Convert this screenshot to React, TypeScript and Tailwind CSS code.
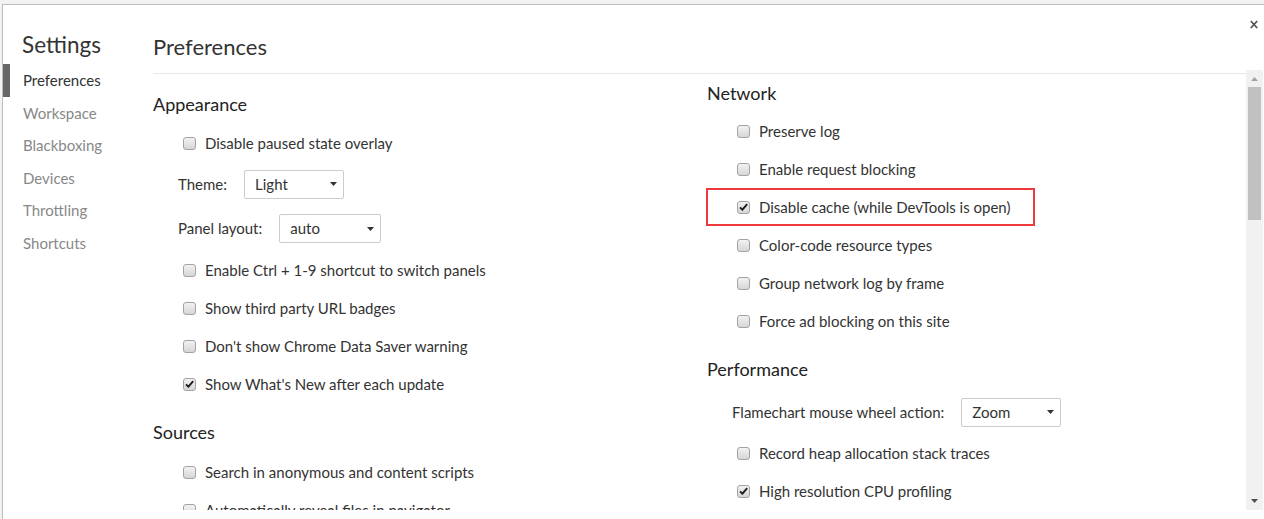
import React from "react";

const FONT = { fontFamily: "Lato, 'Noto Sans', sans-serif" };

function Box({ checked }: { checked?: boolean }) {
  return (
    <span className="w-[13px] h-[13px] shrink-0 rounded-[3px] border border-[#a3a3a3] bg-linear-to-b from-[#f2f2f2] to-[#d6d6d6] flex items-center justify-center">
      {checked && (
        <svg width="9" height="8" viewBox="0 0 9 8">
          <path d="M1 4.3 L3.4 6.7 L8.2 1.2" stroke="#1f1f1f" strokeWidth="1.9" fill="none" />
        </svg>
      )}
    </span>
  );
}

function Row({ label, checked }: { label: string; checked?: boolean }) {
  return (
    <div className="h-[38px] flex items-center pl-[30px]">
      <Box checked={checked} />
      <span className="ml-[9px] text-[15px] text-[#333] whitespace-nowrap">{label}</span>
    </div>
  );
}

function Arrow() {
  return (
    <svg width="7" height="4" viewBox="0 0 7 4">
      <path d="M0 0 L7 0 L3.5 4 Z" fill="#333" />
    </svg>
  );
}

function Select({ value, className }: { value: string; className: string }) {
  return (
    <div
      className={
        "h-[29px] border border-[#cccccc] rounded-[2px] bg-white flex items-center justify-between pl-[10px] pr-[6px] " +
        className
      }
    >
      <span className="text-[15px] text-[#333]">{value}</span>
      <Arrow />
    </div>
  );
}

export default function App() {
  const nav = ["Preferences", "Workspace", "Blackboxing", "Devices", "Throttling", "Shortcuts"];
  return (
    <div className="w-[1264px] h-[519px] bg-[#f2f2f2] pt-[4px] pl-[2px] overflow-hidden flex" style={FONT}>
      <div className="flex-1 flex bg-white border-t border-l border-[#bdbdbd]">
        {/* Sidebar */}
        <div className="w-[150px] shrink-0 flex flex-col">
          <div className="pl-[19px] pt-[26px] h-[59px] text-[22.5px] leading-[28px] text-[#333]">Settings</div>
          <div className="flex flex-col">
            {nav.map((n, i) => (
              <div key={n} className="h-[32.5px] flex items-stretch">
                <span className={i === 0 ? "w-[7px] bg-[#666]" : "w-[7px]"} />
                <span
                  className={
                    "ml-[13px] flex items-center text-[15px] " + (i === 0 ? "text-[#333]" : "text-[#888]")
                  }
                >
                  {n}
                </span>
              </div>
            ))}
          </div>
        </div>

        {/* Content */}
        <div className="flex-1 flex flex-col">
          <div className="h-[65px] flex justify-between">
            <div className="pt-[28px] text-[22px] leading-[28px] text-[#333]">Preferences</div>
            <div className="pt-[15px] pr-[6px]">
              <svg width="8" height="9" viewBox="0 0 8 9">
                <path d="M0.8 1 L7.2 8 M7.2 1 L0.8 8" stroke="#555" strokeWidth="1.8" />
              </svg>
            </div>
          </div>
          <div className="h-[440px] flex">
            <div className="flex-1 overflow-hidden">
              <div className="mt-[3px] border-t border-[#e8e8e8] flex">
                {/* Left column */}
                <div className="w-[554px] shrink-0 flex flex-col">
                  <div className="h-[50px] flex items-end pb-[8px] text-[18px] leading-[24px] text-[#222]">Appearance</div>
                  <Row label="Disable paused state overlay" />
                  <div className="h-[44px] flex items-center pl-[25px]">
                    <span className="text-[15px] text-[#333]">Theme:</span>
                    <Select value="Light" className="ml-[17px] w-[100px]" />
                  </div>
                  <div className="h-[45px] flex items-center pl-[25px]">
                    <span className="text-[15px] text-[#333]">Panel layout:</span>
                    <Select value="auto" className="ml-[17px] w-[102px]" />
                  </div>
                  <Row label="Enable Ctrl + 1-9 shortcut to switch panels" />
                  <Row label="Show third party URL badges" />
                  <Row label="Don't show Chrome Data Saver warning" />
                  <Row label="Show What's New after each update" checked />
                  <div className="h-[50px] flex items-end pb-[9px] text-[18px] leading-[24px] text-[#222]">Sources</div>
                  <Row label="Search in anonymous and content scripts" />
                  <Row label="Automatically reveal files in navigator" />
                </div>
                {/* Right column */}
                <div className="flex-1 flex flex-col">
                  <div className="h-[38px] flex items-center text-[18px] leading-[24px] text-[#222]">Network</div>
                  <Row label="Preserve log" />
                  <Row label="Enable request blocking" />
                  <div className="h-[38px] w-[329px] -ml-[1px] border-2 border-[#ee3a3c] flex items-center pl-[29px]">
                    <Box checked />
                    <span className="ml-[9px] text-[15px] text-[#333] whitespace-nowrap">Disable cache (while DevTools is open)</span>
                  </div>
                  <Row label="Color-code resource types" />
                  <Row label="Group network log by frame" />
                  <Row label="Force ad blocking on this site" />
                  <div className="h-[50px] flex items-end pb-[9px] text-[18px] leading-[24px] text-[#222]">Performance</div>
                  <div className="h-[44px] flex items-center pl-[25px]">
                    <span className="text-[15px] text-[#333]">Flamechart mouse wheel action:</span>
                    <Select value="Zoom" className="ml-[17px] w-[100px]" />
                  </div>
                  <Row label="Record heap allocation stack traces" />
                  <Row label="High resolution CPU profiling" checked />
                </div>
              </div>
            </div>
            {/* Scrollbar */}
            <div className="w-[17px] bg-[#f1f1f1] flex flex-col items-center">
              <div className="h-[17px] flex items-center justify-center pt-[1px]">
                <svg width="7" height="4" viewBox="0 0 7 4">
                  <path d="M3.5 0 L7 4 L0 4 Z" fill="#a3a3a3" />
                </svg>
              </div>
              <div className="w-[13px] h-[133px] bg-[#c1c1c1]" />
              <div className="flex-1" />
              <div className="h-[17px] flex items-center justify-center pb-[2px]">
                <svg width="7" height="4" viewBox="0 0 7 4">
                  <path d="M0 0 L7 0 L3.5 4 Z" fill="#505050" />
                </svg>
              </div>
            </div>
            <div className="w-[1px]" />
          </div>
        </div>
      </div>
    </div>
  );
}
